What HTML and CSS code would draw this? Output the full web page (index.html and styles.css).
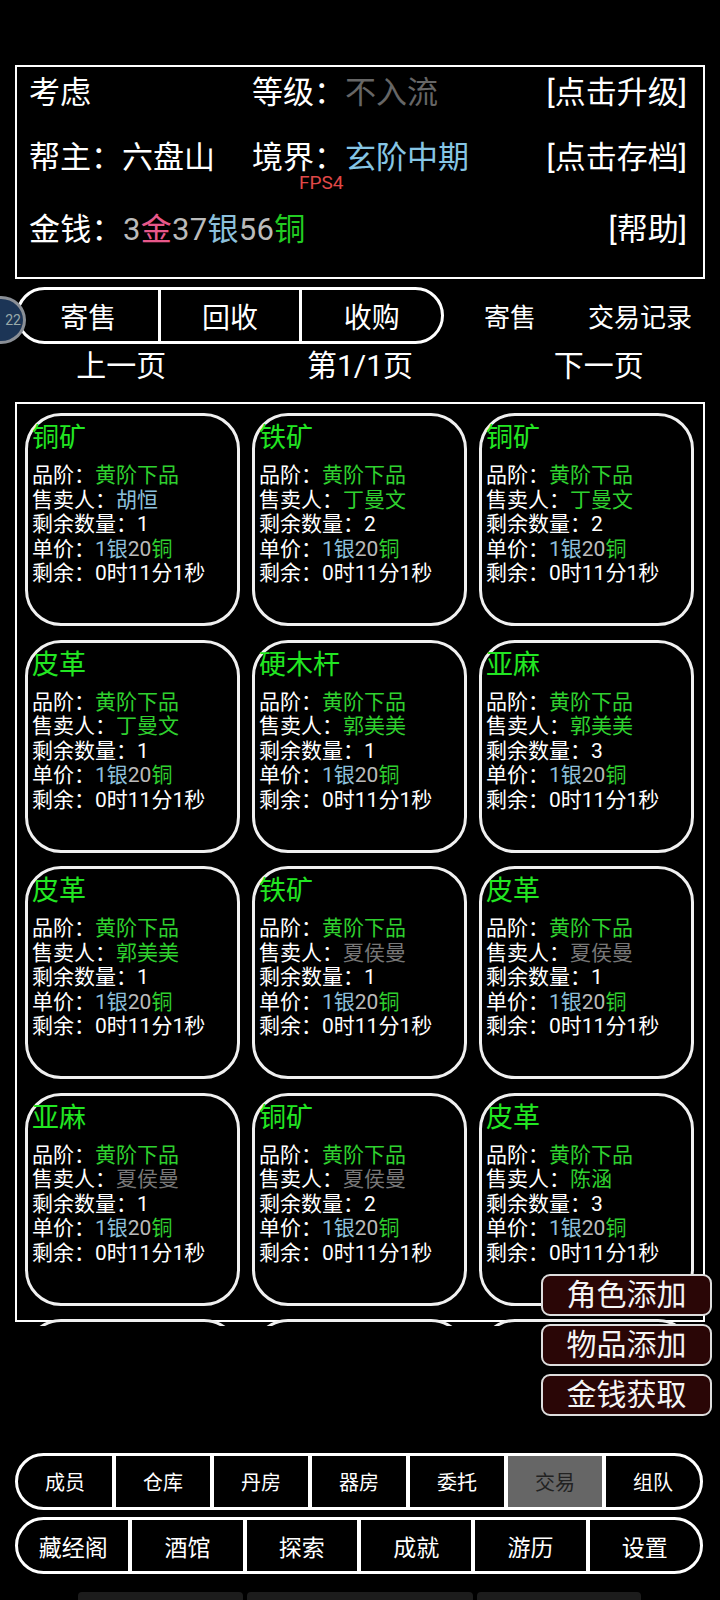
FILE: index.html
```html
<!DOCTYPE html>
<html lang="zh">
<head>
    <meta charset="UTF-8">
    <meta name="viewport" content="width=device-width, initial-scale=1.0">
    <title>交易</title>
    <link rel="stylesheet" href="styles.css">
</head>
<body>
    <div class="bubble">22</div>

    <div class="info">
        <div class="info-row">
            <span>考虑</span>
            <span>等级：<span class="grey">不入流</span></span>
            <span>[点击升级]</span>
        </div>
        <div class="info-row">
            <span>帮主：六盘山</span>
            <span>境界：<span class="sky">玄阶中期</span></span>
            <span>[点击存档]</span>
        </div>
        <div class="info-row money">
            <span class="wide">金钱：<span class="num">3</span><span class="gold">金</span><span class="num">37</span><span class="silver">银</span><span class="num">56</span><span class="copper">铜</span></span>
            <span>[帮助]</span>
        </div>
        <div class="fps">FPS4</div>
    </div>

    <div class="tab-row">
        <div class="tabs">
            <span>寄售</span>
            <span>回收</span>
            <span>收购</span>
        </div>
        <span class="tab-link">寄售</span>
        <span class="tab-link">交易记录</span>
    </div>

    <div class="pager">
        <span>上一页</span>
        <span>第1/1页</span>
        <span>下一页</span>
    </div>

    <div class="market">
        <div class="grid">
            <div class="card">
                <h3>铜矿</h3>
                <div>品阶：<span class="green">黄阶下品</span></div>
                <div>售卖人：<span class="blue">胡恒</span></div>
                <div>剩余数量：1</div>
                <div>单价：<span class="silver">1银</span><span class="num">20</span><span class="green">铜</span></div>
                <div>剩余：0时11分1秒</div>
            </div>
            <div class="card">
                <h3>铁矿</h3>
                <div>品阶：<span class="green">黄阶下品</span></div>
                <div>售卖人：<span class="green">丁曼文</span></div>
                <div>剩余数量：2</div>
                <div>单价：<span class="silver">1银</span><span class="num">20</span><span class="green">铜</span></div>
                <div>剩余：0时11分1秒</div>
            </div>
            <div class="card">
                <h3>铜矿</h3>
                <div>品阶：<span class="green">黄阶下品</span></div>
                <div>售卖人：<span class="green">丁曼文</span></div>
                <div>剩余数量：2</div>
                <div>单价：<span class="silver">1银</span><span class="num">20</span><span class="green">铜</span></div>
                <div>剩余：0时11分1秒</div>
            </div>

            <div class="card">
                <h3>皮革</h3>
                <div>品阶：<span class="green">黄阶下品</span></div>
                <div>售卖人：<span class="green">丁曼文</span></div>
                <div>剩余数量：1</div>
                <div>单价：<span class="silver">1银</span><span class="num">20</span><span class="green">铜</span></div>
                <div>剩余：0时11分1秒</div>
            </div>
            <div class="card">
                <h3>硬木杆</h3>
                <div>品阶：<span class="green">黄阶下品</span></div>
                <div>售卖人：<span class="green">郭美美</span></div>
                <div>剩余数量：1</div>
                <div>单价：<span class="silver">1银</span><span class="num">20</span><span class="green">铜</span></div>
                <div>剩余：0时11分1秒</div>
            </div>
            <div class="card">
                <h3>亚麻</h3>
                <div>品阶：<span class="green">黄阶下品</span></div>
                <div>售卖人：<span class="green">郭美美</span></div>
                <div>剩余数量：3</div>
                <div>单价：<span class="silver">1银</span><span class="num">20</span><span class="green">铜</span></div>
                <div>剩余：0时11分1秒</div>
            </div>

            <div class="card">
                <h3>皮革</h3>
                <div>品阶：<span class="green">黄阶下品</span></div>
                <div>售卖人：<span class="green">郭美美</span></div>
                <div>剩余数量：1</div>
                <div>单价：<span class="silver">1银</span><span class="num">20</span><span class="green">铜</span></div>
                <div>剩余：0时11分1秒</div>
            </div>
            <div class="card">
                <h3>铁矿</h3>
                <div>品阶：<span class="green">黄阶下品</span></div>
                <div>售卖人：<span class="dim">夏侯曼</span></div>
                <div>剩余数量：1</div>
                <div>单价：<span class="silver">1银</span><span class="num">20</span><span class="green">铜</span></div>
                <div>剩余：0时11分1秒</div>
            </div>
            <div class="card">
                <h3>皮革</h3>
                <div>品阶：<span class="green">黄阶下品</span></div>
                <div>售卖人：<span class="dim">夏侯曼</span></div>
                <div>剩余数量：1</div>
                <div>单价：<span class="silver">1银</span><span class="num">20</span><span class="green">铜</span></div>
                <div>剩余：0时11分1秒</div>
            </div>

            <div class="card">
                <h3>亚麻</h3>
                <div>品阶：<span class="green">黄阶下品</span></div>
                <div>售卖人：<span class="dim">夏侯曼</span></div>
                <div>剩余数量：1</div>
                <div>单价：<span class="silver">1银</span><span class="num">20</span><span class="green">铜</span></div>
                <div>剩余：0时11分1秒</div>
            </div>
            <div class="card">
                <h3>铜矿</h3>
                <div>品阶：<span class="green">黄阶下品</span></div>
                <div>售卖人：<span class="dim">夏侯曼</span></div>
                <div>剩余数量：2</div>
                <div>单价：<span class="silver">1银</span><span class="num">20</span><span class="green">铜</span></div>
                <div>剩余：0时11分1秒</div>
            </div>
            <div class="card">
                <h3>皮革</h3>
                <div>品阶：<span class="green">黄阶下品</span></div>
                <div>售卖人：<span class="green">陈涵</span></div>
                <div>剩余数量：3</div>
                <div>单价：<span class="silver">1银</span><span class="num">20</span><span class="green">铜</span></div>
                <div>剩余：0时11分1秒</div>
            </div>

            <div class="card"></div>
            <div class="card"></div>
            <div class="card"></div>
        </div>
    </div>

    <div class="tools">
        <span>角色添加</span>
        <span>物品添加</span>
        <span>金钱获取</span>
    </div>

    <div class="nav">
        <span>成员</span>
        <span>仓库</span>
        <span>丹房</span>
        <span>器房</span>
        <span>委托</span>
        <span class="active">交易</span>
        <span>组队</span>
    </div>
    <div class="nav nav-big">
        <span>藏经阁</span>
        <span>酒馆</span>
        <span>探索</span>
        <span>成就</span>
        <span>游历</span>
        <span>设置</span>
    </div>

    <div class="bars">
        <span class="bar-a"></span>
        <span class="bar-b"></span>
        <span class="bar-c"></span>
    </div>
</body>
</html>
```

FILE: styles.css
```css
body {
    margin: 0;
    background-color: #000;
    color: #fff;
    font-family: Roboto, "Noto Sans CJK SC", sans-serif;
    width: 720px;
    height: 1600px;
    overflow: hidden;
    position: relative;
}
.grey {
    color: #666;
}
.sky {
    color: #86c5e4;
}
.num {
    color: #bbb;
}
.gold {
    color: #e8588a;
}
.silver {
    color: #8cc0dc;
}
.copper {
    color: #22cc22;
}
.green {
    color: #2fd02f;
}
.blue {
    color: #8cc0dc;
}
.dim {
    color: #777;
}

.bubble {
    position: absolute;
    left: -24px;
    top: 296px;
    width: 42px;
    height: 42px;
    border: 3px solid #8a8f96;
    border-radius: 50%;
    background-color: #1c3556;
    color: #9aa;
    font-size: 14px;
    line-height: 42px;
    text-align: right;
    padding-right: 2px;
    box-sizing: content-box;
}

.info {
    position: relative;
    margin: 65px 0 0 15px;
    width: 690px;
    height: 214px;
    box-sizing: border-box;
    border: 2px solid #fff;
    padding: 6px 16px 0 12px;
    font-size: 31px;
}
.info-row {
    display: grid;
    grid-template-columns: 223px 1fr auto;
    line-height: 40px;
}
.info-row + .info-row {
    margin-top: 25px;
}
.info-row.money {
    margin-top: 32px;
}
.info-row .wide {
    grid-column: 1 / 3;
    letter-spacing: 0.3px;
}
.fps {
    position: absolute;
    left: 282px;
    top: 106px;
    font-size: 19px;
    line-height: 20px;
    color: #e04848;
}

.tab-row {
    display: flex;
    align-items: center;
    margin-top: 8px;
    height: 57px;
}
.tabs {
    display: flex;
    margin-left: 16px;
    width: 428px;
    height: 57px;
    box-sizing: border-box;
    border: 3px solid #fff;
    border-radius: 29px;
    overflow: hidden;
}
.tabs span {
    flex: 1;
    display: flex;
    align-items: center;
    justify-content: center;
    font-size: 28px;
}
.tabs span + span {
    border-left: 3px solid #fff;
}
.tab-link {
    font-size: 26px;
    margin-left: 40px;
}
.tab-link + .tab-link {
    margin-left: 52px;
}

.pager {
    display: grid;
    grid-template-columns: repeat(3, 1fr);
    margin-top: 2px;
    padding: 0 2px;
    font-size: 30px;
    line-height: 40px;
    text-align: center;
}

.market {
    margin: 16px 0 0 15px;
    width: 690px;
    height: 920px;
    box-sizing: border-box;
    border: 2px solid #fff;
}
.grid {
    display: grid;
    grid-template-columns: repeat(3, 215px);
    grid-auto-rows: 213px;
    column-gap: 12px;
    row-gap: 13.5px;
    padding: 9px 0 0 8px;
    height: 922px;
    box-sizing: border-box;
    overflow: hidden;
}
.card {
    box-sizing: border-box;
    border: 3px solid #f0f0f0;
    border-radius: 36px;
    padding: 5px 4px 0;
    font-size: 21px;
    line-height: 24.5px;
    white-space: nowrap;
}
.card h3 {
    margin: 0 0 8px;
    font-size: 27px;
    line-height: 34px;
    font-weight: normal;
    color: #22e622;
}

.tools {
    position: absolute;
    left: 541px;
    top: 1274px;
    width: 171px;
    display: flex;
    flex-direction: column;
    gap: 8px;
}
.tools span {
    height: 42px;
    box-sizing: border-box;
    border: 2px solid #ddd;
    border-radius: 9px;
    background-color: #2a0606;
    color: #f4f4f4;
    font-size: 30px;
    line-height: 38px;
    text-align: center;
}

.nav {
    display: flex;
    margin: 131px 0 0 15px;
    width: 688px;
    height: 57px;
    box-sizing: border-box;
    border: 3px solid #fff;
    border-radius: 29px;
    overflow: hidden;
}
.nav span {
    flex: 1;
    display: flex;
    align-items: center;
    justify-content: center;
    font-size: 20px;
}
.nav span + span {
    border-left: 4px solid #fff;
}
.nav .active {
    background-color: #666;
    color: #222;
}
.nav-big {
    margin-top: 7px;
}
.nav-big span {
    font-size: 23px;
}

.bars {
    display: flex;
    gap: 4px;
    margin-top: 18px;
    padding-left: 78px;
}
.bars span {
    height: 12px;
    background-color: #1c1c1c;
    border-radius: 4px 4px 0 0;
}
.bar-a {
    width: 165px;
}
.bar-b {
    width: 226px;
}
.bar-c {
    width: 164px;
}
```
